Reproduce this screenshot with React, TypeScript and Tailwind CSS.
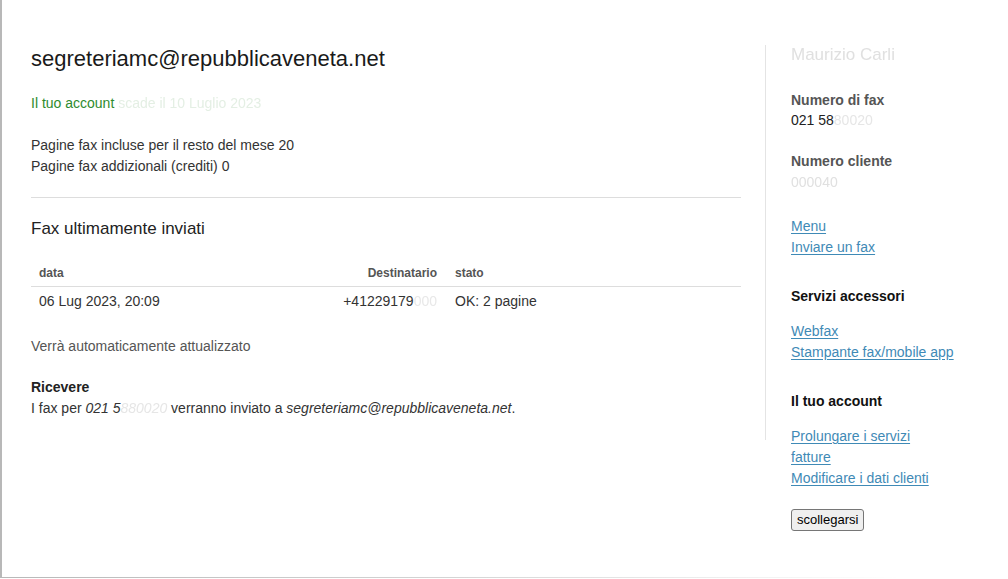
import React from "react";

const linkCls = "text-[#3f8ab6] underline underline-offset-[2px] decoration-[#3f8ab6] block w-fit";

const faxRows = [
  { data: "06 Lug 2023, 20:09", dest: "+41229179", hidden: "000", stato: "OK: 2 pagine" },
];

export default function App() {
  return (
    <div className="w-[1008px] h-[579px] bg-white font-['Liberation_Sans',Arial,sans-serif] text-[14px] text-[#333] overflow-hidden">
      <div className="h-[577px] border-l-2 border-[#b8b8b8] flex pt-[45px] pl-[29px]">
        {/* Main column */}
        <div className="w-[710px] flex flex-col">
          <h1 className="mt-[2px] text-[22px] leading-[24px] text-[#1a1a1a]">
            segreteriamc@repubblicaveneta.net
          </h1>
          <p className="mt-[22px] leading-[20px] text-[#2e8b2e]">
            Il tuo account <span className="text-[#e4efe4] blur-[0.6px]">scade il 10 Luglio 2023</span>
          </p>
          <div className="mt-[22px] leading-[21px]">
            <p>Pagine fax incluse per il resto del mese 20</p>
            <p>Pagine fax addizionali (crediti) 0</p>
          </div>
          <hr className="mt-[20px] border-t border-[#ddd]" />
          <h2 className="mt-[20px] text-[17px] leading-[22px] text-[#222]">Fax ultimamente inviati</h2>

          <div className="mt-[19px]">
            <div className="grid grid-cols-[263px_152px_1fr] h-[28px] items-center border-b border-[#ddd] text-[12px] font-bold text-[#555]">
              <div className="px-2">data</div>
              <div className="px-[9px] text-right">Destinatario</div>
              <div className="px-[9px]">stato</div>
            </div>
            {faxRows.map((row) => (
              <div key={row.data} className="grid grid-cols-[263px_152px_1fr] h-[28px] items-center">
                <div className="px-2">{row.data}</div>
                <div className="px-[9px] text-right">
                  {row.dest}
                  <span className="text-[#e8e8e8] blur-[0.6px]">{row.hidden}</span>
                </div>
                <div className="px-[9px]">{row.stato}</div>
              </div>
            ))}
          </div>

          <p className="mt-[21px] leading-[20px] text-[#555]">Verrà automaticamente attualizzato</p>

          <div className="mt-[21px] leading-[21px]">
            <p className="font-bold text-[#222]">Ricevere</p>
            <p>
              I fax per <em>021 5<span className="text-[#e6e6e6] blur-[0.6px]">880020</span></em> verranno inviato a{" "}
              <em>segreteriamc@repubblicaveneta.net</em>.
            </p>
          </div>
        </div>

        {/* Sidebar */}
        <div className="ml-[24px] flex">
          <div className="w-px h-[395px] bg-[#e4e4e4]" />
          <div className="pl-[25px] flex flex-col">
            <p className="text-[17px] leading-[20px] text-[#e0e0e0] blur-[0.6px]">Maurizio Carli</p>

            <div className="mt-[25px] leading-[20px]">
              <p className="font-bold text-[#555]">Numero di fax</p>
              <p className="text-[#222]">
                021 58<span className="text-[#e6e6e6] blur-[0.6px]">80020</span>
              </p>
            </div>

            <div className="mt-[21px] leading-[21px]">
              <p className="font-bold text-[#555]">Numero cliente</p>
              <p className="text-[#e0e0e0] blur-[0.6px]">000040</p>
            </div>

            <div className="mt-[23px] leading-[21px]">
              <a href="#" className={linkCls}>Menu</a>
              <a href="#" className={linkCls}>Inviare un fax</a>
            </div>

            <p className="mt-[28px] leading-[20px] font-bold text-[#111]">Servizi accessori</p>
            <div className="mt-[15px] leading-[21px]">
              <a href="#" className={linkCls}>Webfax</a>
              <a href="#" className={linkCls}>Stampante fax/mobile app</a>
            </div>

            <p className="mt-[28px] leading-[20px] font-bold text-[#111]">Il tuo account</p>
            <div className="mt-[15px] leading-[21px]">
              <a href="#" className={linkCls}>Prolungare i servizi</a>
              <a href="#" className={linkCls}>fatture</a>
              <a href="#" className={linkCls}>Modificare i dati clienti</a>
            </div>

            <button className="mt-[20px] w-fit h-[22px] px-[5px] border border-[#767676] rounded-[3px] bg-[#efefef] text-[13px] leading-[18px] text-black">
              scollegarsi
            </button>
          </div>
        </div>
      </div>
      <div className="h-px w-[900px] bg-gradient-to-r from-[#b8b8b8] via-[#d4d4d4] to-transparent" />
    </div>
  );
}
